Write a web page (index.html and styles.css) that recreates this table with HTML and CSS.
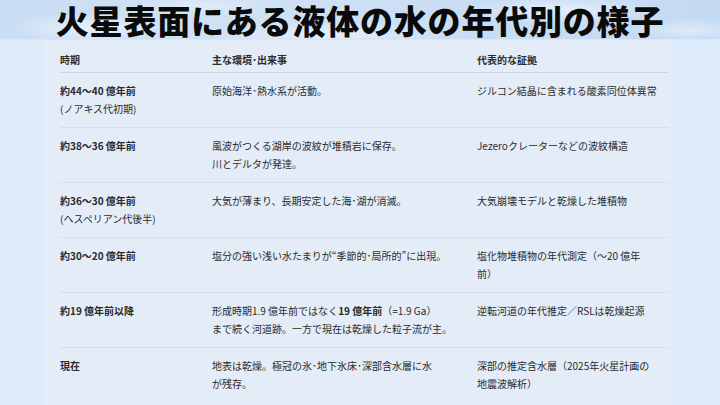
FILE: index.html
```html
<!DOCTYPE html>
<html lang="ja">
<head>
<meta charset="utf-8">
<title>火星表面にある液体の水の年代別の様子</title>
<link rel="stylesheet" href="styles.css">
</head>
<body>
<header class="banner">
  <h1 class="title">火星表面にある液体の水の年代別の様子</h1>
</header>
<main class="panel">
  <table class="timeline">
    <colgroup>
      <col class="c-period">
      <col class="c-event">
      <col class="c-proof">
    </colgroup>
    <thead>
      <tr>
        <th>時期</th>
        <th>主な環境･出来事</th>
        <th>代表的な証拠</th>
      </tr>
    </thead>
    <tbody>
      <tr>
        <td class="period"><b>約44〜40 億年前</b><br><span class="era">(ノアキス代初期)</span></td>
        <td>原始海洋･熱水系が活動。</td>
        <td>ジルコン結晶に含まれる酸素同位体異常</td>
      </tr>
      <tr>
        <td class="period"><b>約38〜36 億年前</b></td>
        <td>風波がつくる湖岸の波紋が堆積岩に保存。<br>川とデルタが発達。</td>
        <td>Jezeroクレーターなどの波紋構造</td>
      </tr>
      <tr>
        <td class="period"><b>約36〜30 億年前</b><br><span class="era">(ヘスペリアン代後半)</span></td>
        <td>大気が薄まり、長期安定した海･湖が消滅。</td>
        <td>大気崩壊モデルと乾燥した堆積物</td>
      </tr>
      <tr>
        <td class="period"><b>約30〜20 億年前</b></td>
        <td>塩分の強い浅い水たまりが“季節的･局所的”に出現。</td>
        <td>塩化物堆積物の年代測定（〜20 億年<br>前）</td>
      </tr>
      <tr>
        <td class="period"><b>約19 億年前以降</b></td>
        <td>形成時期1.9 億年前ではなく<b>19 億年前</b>（=1.9 Ga）<br>まで続く河道跡。一方で現在は乾燥した粒子流が主。</td>
        <td>逆転河道の年代推定／RSLは乾燥起源</td>
      </tr>
      <tr>
        <td class="period"><b>現在</b></td>
        <td>地表は乾燥。極冠の氷･地下氷床･深部含水層に水<br>が残存。</td>
        <td>深部の推定含水層（2025年火星計画の<br>地震波解析）</td>
      </tr>
    </tbody>
  </table>
</main>
</body>
</html>
```

FILE: styles.css
```css
* {
  box-sizing: border-box;
}

html, body {
  margin: 0;
  padding: 0;
}

body {
  width: 720px;
  height: 405px;
  overflow: hidden;
  background: #dceafa;
  font-family: "Noto Sans CJK JP", "Noto Sans", sans-serif;
  color: #2b2b2b;
  display: flex;
  flex-direction: column;
}

.banner {
  height: 40px;
  flex: none;
  background:
    radial-gradient(ellipse 120px 22px at 90px 28px, rgba(238, 245, 253, 0.8), rgba(238, 245, 253, 0) 70%),
    radial-gradient(ellipse 160px 18px at 330px 34px, rgba(236, 244, 253, 0.75), rgba(236, 244, 253, 0) 70%),
    radial-gradient(ellipse 140px 20px at 560px 10px, rgba(238, 245, 253, 0.75), rgba(238, 245, 253, 0) 70%),
    radial-gradient(ellipse 90px 16px at 690px 30px, rgba(236, 244, 253, 0.65), rgba(236, 244, 253, 0) 70%),
    radial-gradient(ellipse 100px 14px at 200px 6px, rgba(236, 244, 253, 0.6), rgba(236, 244, 253, 0) 70%),
    linear-gradient(90deg, #c9ddf3 0%, #d0e2f5 35%, #c8dcf3 70%, #c4daf3 100%);
  border-bottom: 1px solid #d8e6f6;
  display: flex;
  align-items: center;
  justify-content: center;
  overflow: visible;
}

.title {
  margin: 0;
  font-size: 33px;
  line-height: 40px;
  font-weight: 900;
  color: #0a0a0a;
  letter-spacing: 0.8px;
  white-space: nowrap;
}

.panel {
  flex: 1;
  margin: 0 48px 0 43px;
  background: #e4ecf8;
  padding: 0 0 0 17px;
}

.timeline {
  width: 609px;
  table-layout: fixed;
  border-collapse: collapse;
  font-size: 10px;
  line-height: 18.5px;
}

.c-period {
  width: 152px;
}

.c-event {
  width: 265px;
}

.c-proof {
  width: 192px;
}

.timeline th {
  text-align: left;
  font-weight: 700;
  color: #2b2b2b;
  padding: 11px 0 2px 0;
  border-bottom: 1px solid #cdd7e3;
  white-space: nowrap;
}

.timeline td {
  vertical-align: top;
  padding: 9px 0 8px 0;
  border-bottom: 1px solid #d6dfea;
  white-space: nowrap;
}

.timeline tbody tr:last-child td {
  border-bottom: none;
}

.timeline b {
  font-weight: 700;
}

.era {
  font-weight: 400;
}
```
